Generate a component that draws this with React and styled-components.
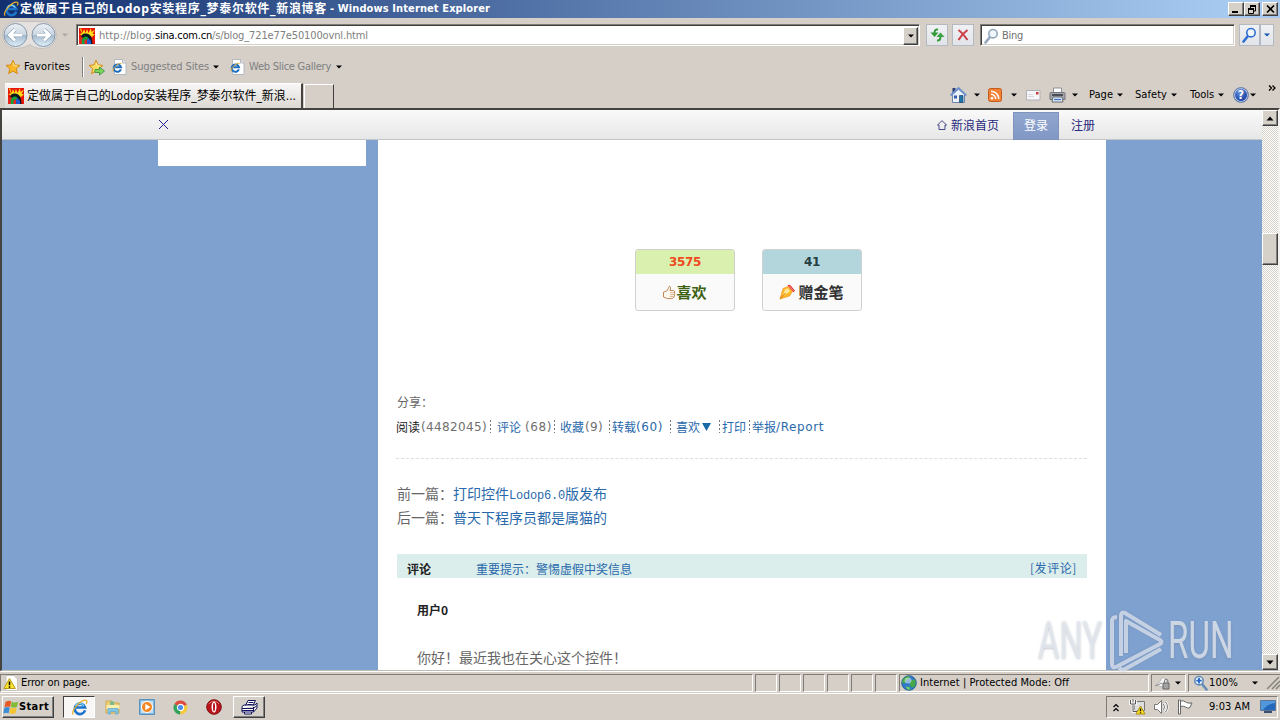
import React from "react";
import styled, { createGlobalStyle } from "styled-components";

const ui = `"DejaVu Sans Condensed", "DejaVu Sans", "Noto Sans CJK SC", sans-serif`;
const song = `"Noto Sans CJK SC", "Liberation Sans", sans-serif`;
const verdana = `"DejaVu Sans", "Noto Sans CJK SC", sans-serif`;

// spreads the letters so that a label takes exactly the given width
const Label = ({ w, children, ...rest }) => {
    const ref = React.useRef(null);
    const [spacing, setSpacing] = React.useState(0);

    React.useLayoutEffect(() => {
        const natural = ref.current.getBoundingClientRect().width;
        setSpacing((w - natural) / children.length);
    }, []);

    return (
        <LabelBox $w={w} {...rest}>
            <span ref={ref} style={{ letterSpacing: spacing }}>{children}</span>
        </LabelBox>
    );
};

const Caret = ({ ml, color = "#000" }) => (
    <Icon $ml={ml} width="6" height="4" viewBox="0 0 6 4">
        <path d="M0 0.5h6L3 3.5z" fill={color} />
    </Icon>
);

const IeLogo = ({ size = 16, ml = 0 }) => (
    <Icon $ml={ml} width={size} height={size} viewBox="0 0 16 16">
        <path d="M13.2 10.6A4.900 4.900 0 1 1 13.200 8H5" fill="none" stroke="#1d74cc" strokeWidth="2.500" />
        <path d="M12.2 6.800A4.400 4.400 0 0 0 4.200 6.500" fill="none" stroke="#7bd0f8" strokeWidth="1.1" />
        <path d="M2 14.6C-0.400 11 10-0.400 14.4 1.300c1 .6.6 2-.2 3.200" fill="none" stroke="#e9b22c" strokeWidth="1.2" />
    </Icon>
);

const PageIe = ({ ml }) => (
    <Icon $ml={ml} width="15" height="16" viewBox="0 0 15 16">
        <path d="M2.5.5h8l3.500 3.500v11.500h-11.500z" fill="#fff" stroke="#b4b8c0" />
        <path d="M10.500.5v3.500h3.500" fill="#e4e8ee" stroke="#b4b8c0" />
        <path d="M8.900 10.400A3.700 3.700 0 1 1 9 8.200H3.200" fill="none" stroke="#1c6dc0" strokeWidth="2" />
        <path d="M1 12.500C0 10 6 3.500 9.500 4.400" fill="none" stroke="#e0ab35" />
    </Icon>
);

const Favicon = ({ ml }) => (
    <Icon $ml={ml} width="16" height="16" viewBox="0 0 16 16">
        <path d="M0 0h16v16H0z" fill="#e81408" />
        <path d="M2 0l1.500 5L5 1l1.500 4L8 1l1.500 4L12 0l.5 4L16 1.500 13.500 6 16 6l-3 3-5-3-4 2-4-2 3-.5L1 1z" fill="#ffdf18" />
        <path d="M2 10c0-3 2-5 5-4.500 4 0 6.500 4 6.500 10.500H2z" fill="#101820" />
        <path d="M0 10l3-1 3 3-2 4H0z" fill="#e9241a" />
        <path d="M3 16c-1-4 1-8 4-7.500 2 0 3 2 3 4l-2 3.500z" fill="#12a038" />
        <path d="M5.500 16v-3.500l2-1.500 1 5z" fill="#e9241a" />
        <path d="M8 16v-4l1.500-2 2.500 3v3z" fill="#2058cf" />
    </Icon>
);

const NavButtons = () => (
    <Icon width="57" height="30" viewBox="0 0 57 30">
        <defs>
            <linearGradient id="navFill" x1="0" y1="0" x2="0" y2="1">
                <stop offset="0" stopColor="#edf1f5" />
                <stop offset=".48" stopColor="#cbd7e2" />
                <stop offset=".52" stopColor="#a4bacd" />
                <stop offset="1" stopColor="#e1f0fa" />
            </linearGradient>
        </defs>
        <path d="M15 1.500h27a13 13 0 0 1 0 27q-9 0-13-4-5 4-14 4a13 13 0 0 1 0-27" fill="#e4e1de" stroke="#c2c0be" />
        {[14.500, 42.500].map((cx) => (
            <circle key={cx} cx={cx} cy="15" r="11.500" fill="url(#navFill)" stroke="#8797aa" />
        ))}
        <path d="M21 15H9M14 9.500L8.500 15l5.500 5.500M36 15h12M43 9.500l5.500 5.500-5.500 5.500" fill="none" stroke="#8da3b8" strokeWidth="4" />
        <path d="M21 15H9M14 9.500L8.500 15l5.500 5.500M36 15h12M43 9.500l5.500 5.500-5.500 5.500" fill="none" stroke="#fff" strokeWidth="2.900" />
    </Icon>
);

const Magnifier = ({ color, glass = "#eef6fc", ml = 0, flip }) => (
    <Icon $ml={ml} width="15" height="16" viewBox="0 0 15 16">
        <g transform={flip ? "translate(15 0) scale(-1 1)" : undefined}>
            <path d="M1.500 14.500L6 9" stroke={color} strokeWidth="2.600" strokeLinecap="round" />
            <circle cx="9" cy="5.700" r="4.200" fill={glass} stroke={color} strokeWidth="1.600" />
            {flip && <path d="M9 3v5.400M6.300 5.700h5.400" stroke="#2266c8" strokeWidth="1.800" />}
        </g>
    </Icon>
);

const Star = ({ ml, add }) => (
    <Icon $ml={ml} width="17" height="17" viewBox="0 0 17 17">
        <path d="M8 1.300l2 4.600 5 .5-3.800 3.300 1.200 4.900L8 12l-4.400 2.600 1.200-4.900L1 6.400l5-.5z" fill={add ? "#f9dc62" : "#fbb829"} stroke="#d58b12" />
        <path d="M8 3.500l1.300 3.300 3 .4" fill="none" stroke="#fff0a6" />
        {add && <path d="M7 10.500h4.500V8l5 4-5 4v-2.500H7z" fill="#7bd55d" stroke="#35913a" strokeWidth=".8" />}
    </Icon>
);

const HomeIcon = ({ ml }) => (
    <Icon $ml={ml} width="17" height="18" viewBox="0 0 17 18">
        <path d="M2.500 2h3v5h-3z" fill="#2b4079" />
        <path d="M2.500 8.500L8.500 3l6 5.500v8h-12z" fill="#eaf1fb" stroke="#6f86ad" />
        <path d="M.7 9.500L8.500 2l7.800 7.500" fill="none" stroke="#6d8fcc" strokeWidth="1.800" />
        <path d="M4 9.500h3v3H4z" fill="#345ea9" />
        <path d="M9.500 9.500h3.500v7H9.500z" fill="#1c78a8" stroke="#2b3f67" strokeWidth=".7" />
    </Icon>
);

const RssIcon = ({ ml }) => (
    <Icon $ml={ml} width="14" height="14" viewBox="0 0 14 14">
        <rect x=".5" y=".5" width="13" height="13" rx="2" fill="#f28336" stroke="#c65a1e" />
        <circle cx="4" cy="10.200" r="1.300" fill="#fff" />
        <path d="M3 6.300a4.700 4.700 0 0 1 4.700 4.700M3 3.200A7.800 7.800 0 0 1 10.800 11" fill="none" stroke="#fff" strokeWidth="1.500" />
    </Icon>
);

const MailIcon = ({ ml }) => (
    <Icon $ml={ml} width="15" height="11" viewBox="0 0 15 11">
        <path d="M.5.5h13.500v9.500H.5z" fill="#f6f6f8" stroke="#b0b0b8" />
        <path d="M2 4.500h5M2 6.500h6" stroke="#d4d5dd" />
        <path d="M10 2h2.500v2.500H10z" fill="#cf3b33" />
    </Icon>
);

const PrinterIcon = ({ ml }) => (
    <Icon $ml={ml} width="17" height="16" viewBox="0 0 17 16">
        <path d="M4.500 1h8v6h-8z" fill="#fff" stroke="#8c9098" />
        <path d="M1 6.500q0-1 1-1h13q1 0 1 1v6H1z" fill="#a3a6aa" stroke="#74777c" />
        <path d="M3 7h11v2H3z" fill="#4b5056" />
        <path d="M4 10h9l1 5H3z" fill="#e4eefb" stroke="#666b72" />
        <path d="M5 12.500h7" stroke="#3974bf" strokeWidth="1.300" />
    </Icon>
);

const HelpIcon = ({ ml }) => (
    <HelpBall $ml={ml}>?</HelpBall>
);

const Thumb = () => (
    <Icon width="14" height="15" viewBox="0 0 14 15">
        <path d="M1.500 7L4.500 6.200C6 4.500 6.500 3 7 1.500c1.600-.5 2 1.200 1 4h3.500q1.500.2 1 1.700.8.800 0 2 .6 1-.3 1.800.3 1.400-1 1.700-.2.900-1.500.9H5.500L1.500 12z" fill="#fffaf1" stroke="#bd8758" />
        <path d="M8 7.700h4M8 9.700h4M8 11.600h3" stroke="#cf9d70" strokeWidth=".8" />
    </Icon>
);

const Pen = () => (
    <Icon width="17" height="16" viewBox="0 0 17 16">
        <path d="M1 15L4 4.500l5-2 4.500 5-3 4.500z" fill="#ffb824" stroke="#f19a28" strokeWidth=".7" />
        <path d="M3.500 12.500l2.500-7 3-1.200 2 3z" fill="#ffe89b" />
        <path d="M1 15l5.500-6" stroke="#d47716" />
        <path d="M8.500 1.500q1.600-1.500 3.200 0l4.300 5.300-1.500 1.500z" fill="#e63532" />
        <path d="M10 1.800l4.700 5" stroke="#ff8575" />
    </Icon>
);

const Warning = ({ ml = 0, page }) => (
    <Icon $ml={ml} width="15" height="16" viewBox="0 0 15 16">
        {page && <path d="M3 .5h8l3.500 3.500v11.500H3z" fill="#fff" stroke="#c8c4bd" />}
        <path d="M6.500 3.500L12.300 13.500H.8z" fill="#ffe52b" stroke="#b8981d" strokeLinejoin="round" />
        <path d="M6.500 6.500v3.700M6.500 11.200v1.500" stroke="#000" strokeWidth="1.500" />
    </Icon>
);

const Globe = () => (
    <Icon $ml={1} width="16" height="16" viewBox="0 0 16 16">
        <circle cx="8" cy="8" r="7.300" fill="#2f78cc" stroke="#2b6498" />
        <path d="M2 4q4-4 7-2.500L8 4 5.500 5.500 4 8.500 1 8q0-2 1-4zM10 5l4-.5q1.500 4-.5 7.500l-3 .5-2-3z" fill="#46a84b" />
        <path d="M4.500 11.500l4 .5 1 2.500-3 .3z" fill="#6dca55" />
        <ellipse cx="7" cy="5.500" rx="3.500" ry="3" fill="#fff" opacity=".48" />
    </Icon>
);

const LockEye = () => (
    <Icon $ml={2} width="18" height="16" viewBox="0 0 18 16">
        <path d="M2 10Q7 7 8 2l5 3-1 6q-5 2-10-1z" fill="#f4f4f4" stroke="#b7b7b7" />
        <path d="M1 11l7-3" stroke="#8d8d8d" />
        <path d="M9 8h6v6H9z" fill="#a2a2a2" stroke="#666" />
        <path d="M10.500 8V6a1.700 1.700 0 0 1 3.400 0v2" fill="none" stroke="#777" />
    </Icon>
);

const WinFlag = () => (
    <Icon width="16" height="15" viewBox="0 0 16 15">
        <path d="M2.500 2q3-2 5.800-.5L7 6.900q-2.500-1-5.500.4z" fill="#e75a27" />
        <path d="M8.800 1.800q3 1.200 6.400 0L14 7q-3 1.200-6.300 0z" fill="#83ba37" />
        <path d="M1.200 7.900q3-1.500 5.600-.3l-1.100 5.600q-2.500-1.200-5.400.3z" fill="#3b8ed8" />
        <path d="M7.400 7.700q3 1.200 6.300 0l-1.200 5.500q-3 1.200-6.200 0z" fill="#f6c431" />
    </Icon>
);

const Folder = () => (
    <Icon width="16" height="16" viewBox="0 0 16 16">
        <path d="M1 2h6l1 2h6v10H1z" fill="#ecce72" stroke="#cbaa4d" />
        <path d="M5 2.500h4v4H5z" fill="#79bb8b" />
        <path d="M1.500 6h13v4h-13z" fill="#fbefaf" />
        <path d="M3 15V9.500h10V15h-2.500v-2.500h-5V15z" fill="#81c6e8" stroke="#5fa8cc" strokeWidth=".7" />
    </Icon>
);

const MediaPlayer = () => (
    <Icon width="16" height="16" viewBox="0 0 16 16">
        <path d="M.5.500h15v15H.5z" fill="#85b8dc" stroke="#5693c3" />
        <path d="M2 2h12v12H2z" fill="#c1dff3" />
        <circle cx="8" cy="8" r="5.500" fill="#f48620" stroke="#fff" />
        <path d="M6.300 4.800v6.400L11.500 8z" fill="#fff" />
    </Icon>
);

const Chrome = () => (
    <Icon width="15" height="15" viewBox="0 0 16 16">
        <path d="M8 8L1.500 4.200A7.500 7.500 0 0 1 14.800 5z" fill="#dd4b3e" />
        <path d="M8 8l6.800-3A7.500 7.500 0 0 1 7.500 15.500z" fill="#f6ca3b" />
        <path d="M8 8l-.5 7.500A7.500 7.500 0 0 1 1.500 4.200z" fill="#32a35b" />
        <circle cx="8" cy="8" r="3.300" fill="#4c8cec" stroke="#fff" strokeWidth="1.200" />
    </Icon>
);

const Opera = () => (
    <Icon width="16" height="16" viewBox="0 0 16 16">
        <circle cx="8" cy="8" r="7.300" fill="#b9151a" stroke="#7f0f13" />
        <path d="M3 5a6 6 0 0 1 10 0" fill="none" stroke="#e27b72" />
        <ellipse cx="8" cy="8" rx="2.500" ry="5.500" fill="#fff" />
        <ellipse cx="8" cy="8" rx="1" ry="4.200" fill="#b9151a" />
    </Icon>
);

const LodopPrinter = () => (
    <Icon width="17" height="16" viewBox="0 0 17 16">
        <path d="M4.500 6.500L7 1.500h7.500l-2.500 5M1 7.500l2-1.500h11l2-2v5l-3.500 4H1zM1 9.500h11.500l3.500-3M1 11.500h11.500M12.500 8v5M3.500 13v2h7v-2" fill="#fff" stroke="#14145f" />
        <path d="M7.500 3.500h5M6.500 5.500h5" stroke="#14145f" />
    </Icon>
);

const TrayNetwork = () => (
    <Icon $ml={10} width="17" height="16" viewBox="0 0 17 16">
        <path d="M5.500 2.500h10v9h-10z" fill="#dedede" stroke="#777" />
        <path d="M1.500 1v4h5V1M4 0v3M4 5.500v7h4" fill="none" stroke="#fff" strokeWidth="2.600" />
        <path d="M1.500 1v4h5V1M4 0v3M4 5.500v7h4" fill="none" stroke="#555" />
        <path d="M11.500 7l4.500 8H7z" fill="#ffe023" stroke="#ab9117" />
        <path d="M11.500 9.500v2.700M11.500 13.200v1" stroke="#000" strokeWidth="1.300" />
    </Icon>
);

const TraySound = () => (
    <Icon $ml={7} width="17" height="16" viewBox="0 0 17 16">
        <path d="M1.500 5.500h3l4-4v13l-4-4h-3z" fill="#fff" stroke="#777" />
        <path d="M10.500 5q2 3 0 6M12.500 3q4 5 0 10" fill="none" stroke="#fff" strokeWidth="2.400" />
        <path d="M10.500 5q2 3 0 6M12.500 3q4 5 0 10" fill="none" stroke="#777" />
    </Icon>
);

const TrayFlag = () => (
    <Icon $ml={7} width="17" height="16" viewBox="0 0 17 16">
        <path d="M1.500 1h2v14h-2zM3.500 2q3-1 6 1.500 2 1 5.500.5l-2.500 5q-2 .5-4-1-2-1.300-5-.5z" fill="#fff" stroke="#666" />
    </Icon>
);

const Monitor = () => (
    <Icon width="16" height="14" viewBox="0 0 16 14">
        <path d="M.5.500h15v10H.5z" fill="#2468ba" stroke="#5d7698" />
        <path d="M1 1h14v2Q7 4 3 10H1z" fill="#5298dc" />
        <path d="M4 11h8v2H4z" fill="#3a4e72" />
    </Icon>
);

const ScrollArrow = ({ down }) => (
    <Bevel $w={16} $h={16}>
        <Icon width="8" height="5" viewBox="0 0 8 5">
            <path d={down ? "M.5.5h7L4 4.500z" : "M.5 4.500h7L4 .5z"} fill="#000" />
        </Icon>
    </Bevel>
);

const frameOuter = "M16 7.500q-5-1-5 4V54q0 5 5 2.500L59 34q3-2 0-4L25 11v32";
const frameInner = "M20 46V6q0-5 4-3L60 25M18 58q3 3 6 1l36-20";

const Watermark = () => (
    <WatermarkBox>
        <WatermarkWord $x={0.645}>ANY</WatermarkWord>
        <PlayLogo width="64" height="62" viewBox="0 0 64 62">
            <path d={frameOuter} />
            <path d={frameInner} />
        </PlayLogo>
        <WatermarkWord $x={0.65}>RUN</WatermarkWord>
    </WatermarkBox>
);

const App = () => {
    return (
        <Screen>
            <GlobalStyle />
            <TitleBar>
                <IeLogo ml={3} />
                <Label w={307} $ml={1} $size={12} $bold $color="#fff">定做属于自己的Lodop安装程序_梦泰尔软件_新浪博客</Label>
                <Label w={160} $ml={3} $bold $color="#fff">- Windows Internet Explorer</Label>
                <WindowButtons>
                    <Bevel $w={16} $h={14}><Icon width="10" height="9"><path d="M1 7h6" stroke="#000" strokeWidth="2" /></Icon></Bevel>
                    <Bevel $w={16} $h={14}>
                        <Icon width="10" height="9"><path d="M3.500 3V1M3 1h6M8.500 1v5H7M1 4h6M1.500 3.500v5h5v-5" fill="none" stroke="#000" /><path d="M3 1h6M1 4h6" stroke="#000" strokeWidth="2" /></Icon>
                    </Bevel>
                    <Bevel $w={16} $h={14} $ml={2}><Icon width="9" height="8"><path d="M1 .5l7 7M8 .5l-7 7" stroke="#000" strokeWidth="1.600" /></Icon></Bevel>
                </WindowButtons>
            </TitleBar>

            <AddressRow>
                <NavButtons />
                <Caret ml={4} color="#a9a7a5" />
                <Field $w={844} $ml={8}>
                    <Favicon ml={1} />
                    <Label w={56} $ml={4} $color="#808080">http://blog.</Label>
                    <Label w={57}>sina.com.cn</Label>
                    <Label w={156} $color="#808080">/s/blog_721e77e50100ovnl.html</Label>
                    <FieldEnd><Bevel $w={15} $h={18}><Caret /></Bevel></FieldEnd>
                </Field>
                <SoftButton $ml={6} $w={22}>
                    <Icon width="15" height="14" viewBox="0 0 15 14">
                        <path d="M8 1.500Q4.500 1 4.500 5M7 12.500q3.500 .5 3.500-4" fill="none" stroke="#309a38" strokeWidth="2" />
                        <path d="M.5 4.500h8L4.500 9z" fill="#309a38" />
                        <path d="M6.500 9h8L10.500 4.500z" fill="#3ba144" />
                    </Icon>
                </SoftButton>
                <SoftButton $ml={4} $w={22}>
                    <Icon width="12" height="12"><path d="M1.500 1q4 3 9 10M10.500 1Q5 5 1.500 11" fill="none" stroke="#cb3f49" strokeWidth="2" /></Icon>
                </SoftButton>
                <Field $w={255} $ml={6}>
                    <Magnifier color="#93a6bb" ml={2} />
                    <Label w={21} $ml={3} $color="#707070">Bing</Label>
                </Field>
                <SoftButton $ml={4} $w={21}><Magnifier color="#3070d3" /></SoftButton>
                <SoftButton $w={14}><Caret color="#1756ad" /></SoftButton>
            </AddressRow>

            <FavoritesRow>
                <Star ml={5} />
                <Label w={46} $ml={2}>Favorites</Label>
                <Divider $ml={12} />
                <Star ml={4} add />
                <PageIe ml={7} />
                <Label w={78} $ml={4} $color="#808080">Suggested Sites</Label>
                <Caret ml={4} />
                <PageIe ml={11} />
                <Label w={82} $ml={4} $color="#808080">Web Slice Gallery</Label>
                <Caret ml={5} />
            </FavoritesRow>

            <TabRow>
                <Tab>
                    <Favicon ml={2} />
                    <Label w={269} $ml={3} $size={12}>定做属于自己的Lodop安装程序_梦泰尔软件_新浪...</Label>
                </Tab>
                <NewTab />
                <HomeIcon ml={616} />
                <Caret ml={7} />
                <RssIcon ml={8} />
                <Caret ml={9} />
                <MailIcon ml={9} />
                <PrinterIcon ml={8} />
                <Caret ml={6} />
                <Label w={24} $ml={11}>Page</Label>
                <Caret ml={4} />
                <Label w={32} $ml={12}>Safety</Label>
                <Caret ml={4} />
                <Label w={24} $ml={13}>Tools</Label>
                <Caret ml={4} />
                <HelpIcon ml={9} />
                <Caret ml={1} />
                <More>
                    <Icon width="8" height="6"><path d="M1 .5L3.500 3 1 5.500M4.500 .5L7 3 4.500 5.500" fill="none" stroke="#000" strokeWidth="1.300" /></Icon>
                </More>
            </TabRow>

            <Viewport>
                <Page>
                    <SinaBar>
                        <Icon $ml={156} width="11" height="11"><path d="M1 1l9 9M10 1l-9 9" stroke="#202090" /></Icon>
                        <SinaLinks>
                            <Icon width="10" height="10"><path d="M.5 5L5 .7 9.500 5H8v4.500H2V5z" fill="none" stroke="#36367d" strokeWidth=".9" /></Icon>
                            <SinaText $ml={4}>新浪首页</SinaText>
                            <Login>登录</Login>
                            <SinaText $ml={12}>注册</SinaText>
                        </SinaLinks>
                    </SinaBar>
                    <Columns>
                        <SideBox />
                        <Article>
                            <Cards>
                                <Card>
                                    <CardCount $bg="#daf0ae" $color="#ef4b1f">3575</CardCount>
                                    <CardAction $color="#3c6212"><Thumb />喜欢</CardAction>
                                </Card>
                                <Card>
                                    <CardCount $bg="#b3d6dd" $color="#263f40">41</CardCount>
                                    <CardAction $color="#303030"><Pen /><CardText>赠金笔</CardText></CardAction>
                                </Card>
                            </Cards>
                            <Share>分享：</Share>
                            <Stats>
                                <Stat $color="#222">阅读</Stat>
                                <Label w={66} $ml={1} $stat $color="#707070">(4482045)</Label>
                                <Sep $ml={3} />
                                <Stat $ml={6}>评论</Stat>
                                <Label w={27} $ml={4} $stat $color="#707070">(68)</Label>
                                <Sep $ml={2} />
                                <Stat $ml={5}>收藏</Stat>
                                <Label w={18} $ml={1} $stat $color="#707070">(9)</Label>
                                <Sep $ml={6} />
                                <Stat $ml={2}>转载</Stat>
                                <Label w={27} $stat $color="#2969ab">(60)</Label>
                                <Sep $ml={7} />
                                <Stat $ml={5}>喜欢</Stat>
                                <Icon $ml={2} width="9" height="8"><path d="M0 0h9L4.500 8z" fill="#1769a8" /></Icon>
                                <Sep $ml={8} />
                                <Stat $ml={2}>打印</Stat>
                                <Sep $ml={3} />
                                <Stat $ml={2}>举报</Stat>
                                <Label w={48} $stat $color="#2969ab">/Report</Label>
                            </Stats>
                            <Siblings>
                                <Sibling>前一篇：<a>打印控件<Mono>Lodop6.0</Mono>版发布</a></Sibling>
                                <Sibling>后一篇：<a>普天下程序员都是属猫的</a></Sibling>
                            </Siblings>
                            <CommentHead>
                                <b>评论</b>
                                <a>重要提示：警惕虚假中奖信息</a>
                                <PostLink>[发评论]</PostLink>
                            </CommentHead>
                            <UserName>用户0</UserName>
                            <Comment>你好！最近我也在关心这个控件！</Comment>
                        </Article>
                    </Columns>
                </Page>
                <Scrollbar>
                    <ScrollArrow />
                    <ThumbTrack><Bevel $w={16} $h={32} /></ThumbTrack>
                    <ScrollArrow down />
                </Scrollbar>
                <Watermark />
            </Viewport>

            <StatusBar>
                <Panel $w={753}>
                    <Warning page ml={2} />
                    <Label w={69} $ml={3}>Error on page.</Label>
                </Panel>
                {[0, 1, 2, 3, 4, 5].map((n) => (
                    <Panel key={n} $w={22} />
                ))}
                <Panel $w={250}>
                    <Globe />
                    <Label w={149} $ml={3}>Internet | Protected Mode: Off</Label>
                </Panel>
                <Panel $w={35}>
                    <LockEye />
                    <Caret ml={3} />
                </Panel>
                <Panel $w={92} $open>
                    <Magnifier color="#648bb5" ml={4} flip />
                    <Label w={29} $ml={1}>100%</Label>
                    <Caret ml={14} />
                    <Icon $ml={9} width="14" height="14"><path d="M0 13L12 1M5 13l8-8M9 13l4-4" stroke="#858078" strokeWidth="1.500" /></Icon>
                </Panel>
            </StatusBar>

            <TaskBar>
                <Bevel $w={52} $h={22} $ml={2} $start>
                    <WinFlag />
                    <Label w={30} $bold>Start</Label>
                </Bevel>
                <ActiveTask><IeLogo size={17} /></ActiveTask>
                <Quick>
                    <Folder />
                    <MediaPlayer />
                    <Chrome />
                    <Opera />
                </Quick>
                <Bevel $w={32} $h={22} $ml={11}><LodopPrinter /></Bevel>
                <Tray>
                    <Icon width="6" height="9"><path d="M.5 4L3 1.500 5.500 4M.5 8L3 5.500 5.500 8" fill="none" stroke="#000" strokeWidth="1.200" /></Icon>
                    <TrayNetwork />
                    <TraySound />
                    <TrayFlag />
                    <Label w={41} $ml={15}>9:03 AM</Label>
                    <TrayEnd><Monitor /></TrayEnd>
                </Tray>
            </TaskBar>
        </Screen>
    );
};

const GlobalStyle = createGlobalStyle`
  body {
    margin: 0;
    overflow: hidden;
  }
  *, *::before, *::after {
    box-sizing: border-box;
  }
`

const Screen = styled.div`
  display: flex;
  flex-direction: column;
  width: 1280px;
  height: 720px;
  overflow: hidden;
  background: #d5cfc8;
  font-family: ${ui};
  font-size: 11px;
  line-height: 14px;
  color: #000;
`

const Icon = styled.svg`
  display: block;
  flex: none;
  margin-left: ${(p) => p.$ml || 0}px;
`

const LabelBox = styled.span`
  flex: none;
  width: ${(p) => p.$w}px;
  margin-left: ${(p) => p.$ml || 0}px;
  white-space: pre;
  color: ${(p) => p.$color || "#000"};
  font-weight: ${(p) => (p.$bold ? 700 : 400)};
  font-family: ${(p) => (p.$stat ? verdana : ui)};
  font-size: ${(p) => p.$size || (p.$stat ? 12 : 11)}px;
`

const Bevel = styled.div`
  display: flex;
  flex: none;
  align-items: center;
  justify-content: ${(p) => (p.$start ? "flex-start" : "center")};
  width: ${(p) => p.$w}px;
  height: ${(p) => p.$h}px;
  margin-left: ${(p) => p.$ml || 0}px;
  background: #d5d0c8;
  border: 1px solid;
  border-color: #fff #404040 #404040 #fff;
  box-shadow: inset -1px -1px #808080;
`

const TitleBar = styled.div`
  display: flex;
  flex: none;
  align-items: center;
  height: 18px;
  background: linear-gradient(90deg, #12306f, #a6caf0 96%);
`

const WindowButtons = styled.div`
  display: flex;
  margin: 0 2px 0 auto;
`

const AddressRow = styled.div`
  display: flex;
  flex: none;
  align-items: center;
  height: 34px;
  padding-left: 1px;
`

const Field = styled.div`
  display: flex;
  flex: none;
  align-items: center;
  width: ${(p) => p.$w}px;
  height: 22px;
  margin-left: ${(p) => p.$ml}px;
  background: #fff;
  border: 1px solid;
  border-color: #807b75 #fff #fff #807b75;
  box-shadow: inset 1px 1px #404040, inset -1px -1px #d5d0c8;
  padding: 1px 1px 0 1px;
`

const FieldEnd = styled.div`
  margin-left: auto;
`

const SoftButton = styled.div`
  display: flex;
  flex: none;
  align-items: center;
  justify-content: center;
  width: ${(p) => p.$w}px;
  height: 22px;
  margin-left: ${(p) => p.$ml || 0}px;
  background: linear-gradient(#f0f1f3, #e1e4e9);
  border: 1px solid #b4b9c2;
`

const FavoritesRow = styled.div`
  display: flex;
  flex: none;
  align-items: center;
  height: 30px;
`

const Divider = styled.div`
  width: 2px;
  height: 20px;
  margin-left: ${(p) => p.$ml}px;
  border-left: 1px solid #808080;
  border-right: 1px solid #fff;
`

const TabRow = styled.div`
  display: flex;
  flex: none;
  align-items: center;
  height: 26px;
  padding-left: 5px;
`

const Tab = styled.div`
  display: flex;
  align-items: center;
  align-self: flex-end;
  width: 298px;
  height: 25px;
  padding-left: 1px;
  background: linear-gradient(#f8f7f6, #dcd8d3);
  border-top: 1px solid #fff;
  border-right: 2px solid #45423f;
`

const NewTab = styled.div`
  align-self: flex-end;
  width: 30px;
  height: 24px;
  margin-left: 1px;
  border: 1px solid #fff;
  border-bottom: 0;
  border-right: 1px solid #404040;
`

const HelpBall = styled.span`
  display: flex;
  align-items: center;
  justify-content: center;
  width: 16px;
  height: 16px;
  margin-left: ${(p) => p.$ml}px;
  border: 1px solid #7287aa;
  border-radius: 50%;
  background: radial-gradient(circle at 40% 30%, #678fe0, #173e9e 70%);
  box-shadow: inset 0 0 0 1px #b9c9e8;
  color: #fff;
  font-weight: 700;
  font-size: 12px;
`

const More = styled.div`
  align-self: flex-start;
  margin: 3px 0 0 12px;
`

const Viewport = styled.div`
  display: flex;
  flex: none;
  position: relative;
  height: 563px;
  border: 2px solid;
  border-color: #45433f #f4f2ef #f4f2ef #45433f;
  border-bottom: 1px solid #bfbcb6;
`

const Page = styled.div`
  display: flex;
  flex-direction: column;
  width: 1260px;
  overflow: hidden;
  background: #7fa1cf;
  font-family: ${song};
`

const SinaBar = styled.div`
  display: flex;
  flex: none;
  align-items: center;
  height: 30px;
  background: linear-gradient(#f9f9f9, #e7e7e7);
  border-bottom: 1px solid #c3c6c9;
`

const SinaLinks = styled.div`
  display: flex;
  align-items: center;
  margin-left: 768px;
  height: 30px;
`

const SinaText = styled.span`
  margin-left: ${(p) => p.$ml}px;
  font-size: 12px;
  color: #28287c;
`

const Login = styled.div`
  width: 46px;
  height: 28px;
  margin: 2px 0 0 14px;
  border: 1px solid #7f93bd;
  background: linear-gradient(#91a7cf, #8197c5);
  color: #fff;
  font-size: 12px;
  line-height: 24px;
  text-align: center;
`

const Columns = styled.div`
  display: flex;
  flex: 1;
  min-height: 0;
`

const SideBox = styled.div`
  width: 208px;
  height: 26px;
  margin: 0 12px 0 156px;
  background: #fff;
`

const Article = styled.div`
  width: 728px;
  padding: 109px 19px 0;
  background: #fff;
  color: #666;

  & a {
    color: #2969ab;
  }
`

const Cards = styled.div`
  display: flex;
  gap: 27px;
  margin-left: 238px;
`

const Card = styled.div`
  width: 100px;
  height: 62px;
  border: 1px solid #cfd0d0;
  border-radius: 3px;
  overflow: hidden;
  background: #fafafa;
`

const CardCount = styled.div`
  height: 24px;
  background: ${(p) => p.$bg};
  color: ${(p) => p.$color};
  font: 700 12px/24px "DejaVu Sans", sans-serif;
  letter-spacing: -0.35px;
  text-align: center;
`

const CardAction = styled.div`
  display: flex;
  align-items: center;
  justify-content: center;
  height: 36px;
  padding-right: 1px;
  color: ${(p) => p.$color};
  font-size: 15px;
  font-weight: 700;
`

const CardText = styled.span`
  margin-left: 2px;
`

const Share = styled.div`
  height: 20px;
  margin-top: 81px;
  font-size: 12px;
  line-height: 20px;
`

const Stats = styled.div`
  display: flex;
  align-items: center;
  height: 47px;
  margin-left: -1px;
  padding-bottom: 17px;
  border-bottom: 1px dashed #dedede;
`

const Stat = styled.span`
  flex: none;
  width: 24px;
  margin-left: ${(p) => p.$ml || 0}px;
  font-size: 12px;
  color: ${(p) => p.$color || "#2969ab"};
`

const Sep = styled.i`
  flex: none;
  width: 1px;
  height: 13px;
  margin-left: ${(p) => p.$ml}px;
  background: repeating-linear-gradient(#777 0 2px, transparent 2px 4px);
`

const Siblings = styled.div`
  padding-top: 22px;
`

const Sibling = styled.div`
  height: 24px;
  font-size: 14px;
  line-height: 24px;
`

const Mono = styled.span`
  font-family: "Liberation Mono", monospace;
  font-size: 12px;
  letter-spacing: -0.2px;
`

const CommentHead = styled.div`
  display: flex;
  height: 24px;
  margin-top: 25px;
  padding: 0 10px;
  background: #dbeeeb;
  font-size: 12px;
  line-height: 29px;

  & b {
    width: 69px;
    color: #222;
  }
`

const PostLink = styled.a`
  margin-left: auto;
  line-height: 27px;
  letter-spacing: 0.6px;
`

const UserName = styled.div`
  margin: 22px 0 0 20px;
  color: #222;
  font-size: 12px;
  font-weight: 700;
  line-height: 20px;
`

const Comment = styled.div`
  margin: 25px 0 0 20px;
  font-size: 14px;
  line-height: 24px;
`

const Scrollbar = styled.div`
  display: flex;
  flex-direction: column;
  width: 16px;
  background: repeating-conic-gradient(#fff 0 25%, #d5d0c8 0 50%) 0 0 / 2px 2px;
`

const ThumbTrack = styled.div`
  flex: 1;
  padding-top: 107px;
`

const WatermarkBox = styled.div`
  display: flex;
  align-items: center;
  position: absolute;
  left: 1036px;
  top: 500px;
  height: 62px;
`

const PlayLogo = styled.svg`
  flex: none;
  margin: 0 3px 0 -3px;
  fill: none;
  stroke: rgba(226, 232, 241, 0.72);
  stroke-width: 4;
  stroke-linejoin: round;
  filter: drop-shadow(0 0 1px rgba(100, 115, 140, 0.4));
`

const WatermarkWord = styled.span`
  width: 66px;
  font: 400 51px/62px Roboto, sans-serif;
  color: rgba(228, 233, 240, 0.78);
  text-shadow: 0 1px 3px rgba(110, 120, 140, 0.4);
  transform: scaleX(${(p) => p.$x});
  transform-origin: left;
`

const StatusBar = styled.div`
  display: flex;
  flex: none;
  gap: 2px;
  height: 22px;
  padding-top: 2px;
  padding-bottom: 1px;
  border-top: 1px solid #fff;
`

const Panel = styled.div`
  display: flex;
  flex: none;
  align-items: center;
  width: ${(p) => p.$w}px;
  border: 1px solid;
  border-color: #807b75 #fff #fff #807b75;
  border-right-width: ${(p) => (p.$open ? 0 : 1)}px;
`

const TaskBar = styled.div`
  display: flex;
  flex: 1;
  padding-top: 2px;
  border-top: 1px solid #fff;
`

const ActiveTask = styled.div`
  display: flex;
  align-items: center;
  justify-content: center;
  width: 32px;
  height: 22px;
  margin-left: 9px;
  background: #f8f7f5;
  border: 1px solid;
  border-color: #404040 #fff #fff #404040;
`

const Quick = styled.div`
  display: flex;
  align-items: center;
  gap: 18px;
  height: 22px;
  margin-left: 10px;
`

const Tray = styled.div`
  display: flex;
  align-items: center;
  width: 172px;
  height: 22px;
  margin: 0 2px 0 auto;
  padding-left: 6px;
  border: 1px solid;
  border-color: #807b75 #fff #fff #807b75;
`

const TrayEnd = styled.div`
  margin-left: auto;
  padding-right: 1px;
`

export default App;
